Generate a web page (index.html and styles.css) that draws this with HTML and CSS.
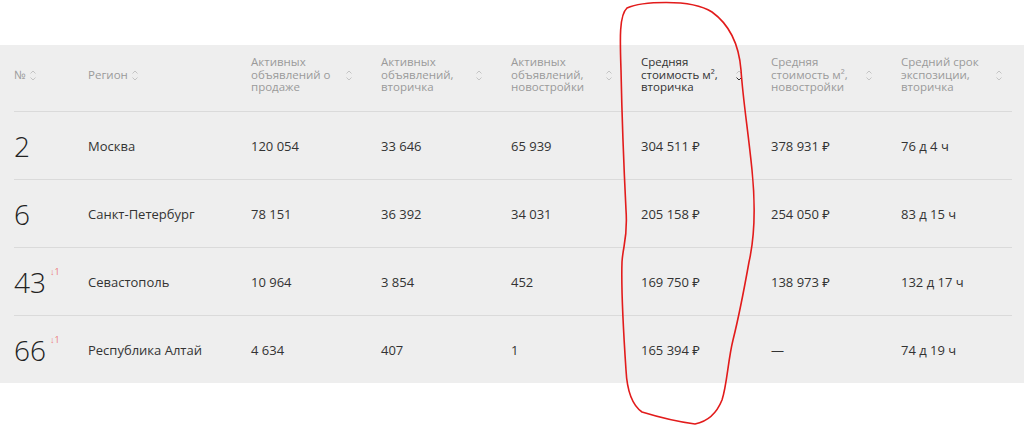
FILE: index.html
```html
<!DOCTYPE html>
<html lang="ru">
<head>
<meta charset="utf-8">
<title>Рейтинг регионов</title>
<link rel="stylesheet" href="styles.css">
</head>
<body>
<div class="board">
  <div class="row head">
    <div class="hc"><span class="ht">№</span><svg class="sort" viewBox="0 0 6 11"><path class="up" d="M0.5 3.5 L3 1 L5.5 3.5"/><path class="dn" d="M0.5 7.5 L3 10 L5.5 7.5"/></svg></div>
    <div class="hc"><span class="ht">Регион</span><svg class="sort" viewBox="0 0 6 11"><path class="up" d="M0.5 3.5 L3 1 L5.5 3.5"/><path class="dn" d="M0.5 7.5 L3 10 L5.5 7.5"/></svg></div>
    <div class="hc"><span class="ht wide">Активных объявлений о продаже</span><svg class="sort" viewBox="0 0 6 11"><path class="up" d="M0.5 3.5 L3 1 L5.5 3.5"/><path class="dn" d="M0.5 7.5 L3 10 L5.5 7.5"/></svg></div>
    <div class="hc"><span class="ht wide">Активных объявлений, вторичка</span><svg class="sort" viewBox="0 0 6 11"><path class="up" d="M0.5 3.5 L3 1 L5.5 3.5"/><path class="dn" d="M0.5 7.5 L3 10 L5.5 7.5"/></svg></div>
    <div class="hc"><span class="ht wide">Активных объявлений, новостройки</span><svg class="sort" viewBox="0 0 6 11"><path class="up" d="M0.5 3.5 L3 1 L5.5 3.5"/><path class="dn" d="M0.5 7.5 L3 10 L5.5 7.5"/></svg></div>
    <div class="hc active"><span class="ht wide">Средняя стоимость м², вторичка</span><svg class="sort" viewBox="0 0 6 11"><path class="up" d="M0.5 3.5 L3 1 L5.5 3.5"/><path class="dn" d="M0.5 7.5 L3 10 L5.5 7.5"/></svg></div>
    <div class="hc"><span class="ht wide">Средняя стоимость м², новостройки</span><svg class="sort" viewBox="0 0 6 11"><path class="up" d="M0.5 3.5 L3 1 L5.5 3.5"/><path class="dn" d="M0.5 7.5 L3 10 L5.5 7.5"/></svg></div>
    <div class="hc"><span class="ht wide">Средний срок экспозиции, вторичка</span><svg class="sort" viewBox="0 0 6 11"><path class="up" d="M0.5 3.5 L3 1 L5.5 3.5"/><path class="dn" d="M0.5 7.5 L3 10 L5.5 7.5"/></svg></div>
  </div>

  <div class="row">
    <div class="rank">2</div>
    <div class="c">Москва</div>
    <div class="c">120 054</div>
    <div class="c">33 646</div>
    <div class="c">65 939</div>
    <div class="c">304 511 ₽</div>
    <div class="c">378 931 ₽</div>
    <div class="c">76 д 4 ч</div>
  </div>
  <div class="row">
    <div class="rank">6</div>
    <div class="c">Санкт-Петербург</div>
    <div class="c">78 151</div>
    <div class="c">36 392</div>
    <div class="c">34 031</div>
    <div class="c">205 158 ₽</div>
    <div class="c">254 050 ₽</div>
    <div class="c">83 д 15 ч</div>
  </div>
  <div class="row">
    <div class="rank">43<span class="delta">↓1</span></div>
    <div class="c">Севастополь</div>
    <div class="c">10 964</div>
    <div class="c">3 854</div>
    <div class="c">452</div>
    <div class="c">169 750 ₽</div>
    <div class="c">138 973 ₽</div>
    <div class="c">132 д 17 ч</div>
  </div>
  <div class="row">
    <div class="rank">66<span class="delta">↓1</span></div>
    <div class="c">Республика Алтай</div>
    <div class="c">4 634</div>
    <div class="c">407</div>
    <div class="c">1</div>
    <div class="c">165 394 ₽</div>
    <div class="c">—</div>
    <div class="c">74 д 19 ч</div>
  </div>
</div>

<svg class="scribble" viewBox="0 0 1024 425" width="1024" height="425">
  <path d="M627 8 C640 2 690 -2 712 12 C730 25 739 45 741 70 C743 100 748 130 752 170 C756 210 754 240 749 262 C744 290 738 320 733 340 C728 360 727 385 722 400 C716 415 705 422 695 424 C680 422 655 416 642 412 C632 405 627 390 626 370 C624 340 621 290 622 262 C623 245 628 238 626 210 C624 170 622 120 621 70 C620 40 619 15 627 8"/>
</svg>
</body>
</html>
```

FILE: styles.css
```css
html, body {
  margin: 0;
  padding: 0;
}

body {
  background: #ffffff;
  font-family: "Open Sans", "Noto Sans", sans-serif;
  color: #333333;
  position: relative;
  width: 1024px;
  height: 425px;
  overflow: hidden;
}

.board {
  margin-top: 45px;
  background: #eeeeee;
  padding: 0 12px 0 14px;
}

.row {
  display: grid;
  grid-template-columns: 74px 163px repeat(5, 130px) 111px;
  align-items: center;
  height: 67px;
  border-bottom: 1px solid #dadada;
}

.row:last-child {
  border-bottom: none;
}

.head {
  height: 67px;
  box-sizing: border-box;
  padding-bottom: 6px;
}

.hc {
  display: flex;
  align-items: center;
}

.ht {
  font-size: 11.5px;
  line-height: 12.6px;
  color: #9a9a9a;
}

.ht.wide {
  width: 90px;
}

.sort {
  width: 6px;
  height: 11px;
  margin-left: 4px;
  flex: none;
}

.ht.wide + .sort {
  margin-left: 5px;
}

.sort path {
  fill: none;
  stroke: #c4c4c4;
  stroke-width: 1;
}

.active .ht {
  color: #333333;
}

.active .sort .dn {
  stroke: #333333;
}

.c {
  font-size: 13px;
  color: #333333;
  white-space: nowrap;
}

.rank {
  font-size: 28px;
  font-weight: 300;
  color: #222222;
  line-height: 1;
  display: flex;
  align-items: flex-start;
}

.delta {
  font-size: 9px;
  font-weight: 400;
  color: #ec7b7b;
  margin-left: 4px;
  margin-top: -1px;
  line-height: 1;
}

.scribble {
  position: absolute;
  left: 0;
  top: 0;
  pointer-events: none;
}

.scribble path {
  fill: none;
  stroke: #e21b1b;
  stroke-width: 1.6;
  stroke-linecap: round;
}
```
